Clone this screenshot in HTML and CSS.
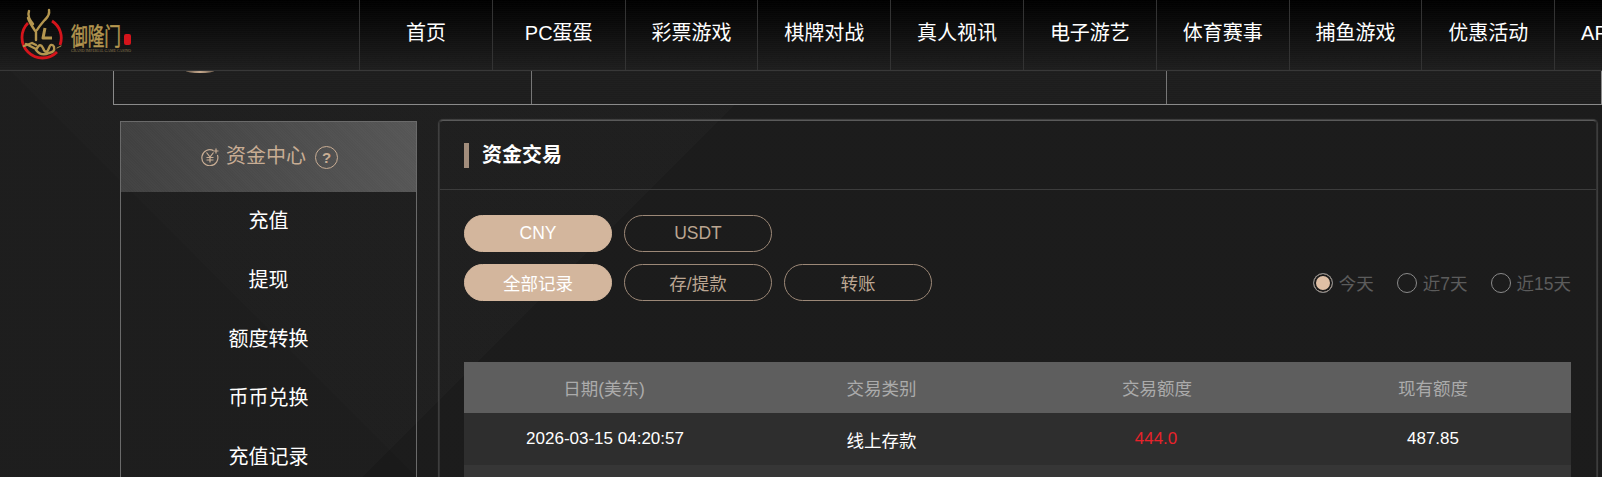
FILE: index.html
```html
<!DOCTYPE html>
<html lang="zh-CN">
<head>
<meta charset="utf-8">
<title>资金交易</title>
<link rel="stylesheet" href="styles.css">
</head>
<body>
<header class="topbar">
  <a class="logo" href="#">
    <svg class="logo-svg" viewBox="0 0 150 70" width="150" height="70" aria-label="御隆门">
      <path class="ring" d="M28 23A20 20 0 1 0 57 52M60 45A20 20 0 0 0 52 21"/>
      <path class="gold" d="M29 11C27 16 30 20 33 24L28 18C30 24 34 29 36 32L36 40M49 10C50 15 47 18 45 20L48 16C44 21 40 25 37 30"/>
      <path class="gold thick" d="M45 28L43 38L52 38"/>
      <path class="gold" d="M24 46L32 43L36 45M26 44L36 49M36 50C39 44 41 44 43 48C45 53 47 53 49 48C50 44 53 44 54 47C55 51 53 52 49 53C45 55 40 55 36 50"/>
      <path class="gold thin" d="M57 48L61 46"/>
      <text class="logo-name" x="71" y="45" textLength="50" lengthAdjust="spacingAndGlyphs">御隆门</text>
      <text class="logo-sub" x="71" y="52" textLength="60" lengthAdjust="spacingAndGlyphs">GRAND IMPERIAL GAME CASINO</text>
      <rect class="seal" x="124" y="34" width="7" height="11" rx="2"/>
    </svg>
  </a>
  <nav class="nav">
    <a class="nav-item" href="#">首页</a>
    <a class="nav-item" href="#">PC蛋蛋</a>
    <a class="nav-item" href="#">彩票游戏</a>
    <a class="nav-item" href="#">棋牌对战</a>
    <a class="nav-item" href="#">真人视讯</a>
    <a class="nav-item" href="#">电子游艺</a>
    <a class="nav-item" href="#">体育赛事</a>
    <a class="nav-item" href="#">捕鱼游戏</a>
    <a class="nav-item" href="#">优惠活动</a>
    <a class="nav-item" href="#">APP下载</a>
  </nav>
</header>

<section class="info">
  <div class="info-cell info-a"><div class="avatar-edge"></div></div>
  <div class="info-cell info-b"></div>
  <div class="info-cell info-c"></div>
</section>

<div class="content">
  <aside class="side">
    <div class="side-title">
      <svg class="coin" viewBox="0 0 18 18" width="18" height="18">
        <path d="M12.5 2.6A8 8 0 1 0 16.4 7"/>
        <path d="M5.5 4.5L9 9L12.5 4.5M9 9V14.5M5.5 9.5H12.5M5.5 12H12.5M15 0.5V5.5M12.5 3H17.5"/>
      </svg>
      <span class="side-label">资金中心</span>
      <span class="help">?</span>
    </div>
    <a class="side-item" href="#">充值</a>
    <a class="side-item" href="#">提现</a>
    <a class="side-item" href="#">额度转换</a>
    <a class="side-item" href="#">币币兑换</a>
    <a class="side-item" href="#">充值记录</a>
  </aside>

  <main class="panel">
    <h1 class="panel-title"><span class="marker"></span><span class="title-text">资金交易</span></h1>
    <div class="panel-body">
      <div class="btn-row">
        <button class="pill is-on">CNY</button>
        <button class="pill">USDT</button>
      </div>
      <div class="filter-row">
        <div class="btn-row">
          <button class="pill is-on">全部记录</button>
          <button class="pill">存/提款</button>
          <button class="pill">转账</button>
        </div>
        <div class="radios">
          <label class="radio"><span class="dot is-on"></span>今天</label>
          <label class="radio"><span class="dot"></span>近7天</label>
          <label class="radio"><span class="dot"></span>近15天</label>
        </div>
      </div>
      <table class="records">
        <thead>
          <tr><th>日期(美东)</th><th>交易类别</th><th>交易额度</th><th>现有额度</th></tr>
        </thead>
        <tbody>
          <tr><td class="num date">2026-03-15 04:20:57</td><td>线上存款</td><td class="num amount">444.0</td><td class="num">487.85</td></tr>
          <tr><td></td><td></td><td></td><td></td></tr>
        </tbody>
      </table>
    </div>
  </main>
</div>
</body>
</html>
```
FILE: styles.css
```css
* { box-sizing: border-box; }
html, body { margin: 0; height: 477px; overflow: hidden; }
body {
  width: 1602px;
  font-family: "Liberation Sans", "Noto Sans CJK SC", sans-serif;
  color: #fff;
  background-color: #1c1c1c;
  background-image:
    linear-gradient(135deg, rgba(255,255,255,.012) 26.25%, rgba(0,0,0,.05) 26.25%),
    linear-gradient(45deg, rgba(0,0,0,.035) 48.1%, rgba(255,255,255,.004) 48.1%);
  background-size: 1600px 1600px;
  background-repeat: no-repeat;
}
a { color: inherit; text-decoration: none; }

.topbar {
  display: flex;
  height: 71px;
  border-bottom: 1px solid #383838;
  background-color: #000;
  background-image:
    repeating-linear-gradient(0deg, rgba(255,255,255,.012) 0 1px, transparent 1px 2px),
    linear-gradient(180deg, #000 0, #1e1e1e 100%);
}
.logo { display: block; width: 359px; flex: none; }
.logo-svg { display: block; }
.ring { fill: none; stroke: #d5141b; stroke-width: 2.8; }
.gold { fill: none; stroke: #b4964f; stroke-width: 2.4; stroke-linecap: round; stroke-linejoin: round; }
.thick { stroke-width: 3; stroke-linecap: butt; }
.thin { stroke-width: 1; }
.logo-name { font-family: "Noto Sans CJK SC", sans-serif; font-size: 24px; fill: #b4964f; stroke: #b4964f; stroke-width: .5px; }
.logo-sub { font-family: "Liberation Serif", serif; font-size: 3.4px; fill: #8d7a50; }
.seal { fill: #d5141b; }

.nav { display: flex; flex: 1; min-width: 0; overflow: hidden; }
.nav-item {
  flex: none;
  width: 132.8px;
  height: 70px;
  padding-top: 19px;
  font-size: 20px;
  line-height: 28px;
  text-align: center;
  border-left: 1px solid #333;
}

.info {
  display: flex;
  height: 34px;
  margin-left: 113px;
  border: 1px solid #8a8a8a;
  border-top: 0;
  background-color: #1d1d1d;
  background-image: repeating-linear-gradient(0deg, rgba(255,255,255,.012) 0 1px, transparent 1px 2px);
}
.info-cell { border-right: 1px solid #777; }
.info-a { width: 418px; }
.info-b { width: 635px; }
.info-c { flex: 1; border-right: 0; }
.avatar-edge {
  width: 28px;
  height: 2px;
  margin-left: 72px;
  border-radius: 0 0 14px 14px / 0 0 2px 2px;
  background: linear-gradient(90deg, #6d5d4e, #c7aa8e 50%, #6d5d4e);
}

.content {
  display: flex;
  align-items: flex-start;
  gap: 22px;
  padding: 15px 0 0 120px;
}

.side {
  flex: none;
  width: 297px;
  margin-top: 1px;
  border: 1px solid #6a6a6a;
  border-bottom: 0;
}
.side-title {
  display: flex;
  align-items: center;
  justify-content: center;
  gap: 7px;
  height: 70px;
  padding-left: 2px;
  background-image:
    repeating-linear-gradient(45deg, rgba(255,255,255,.015) 0 1px, transparent 1px 2px),
    linear-gradient(90deg, #404040, #565656);
  color: #c8ad94;
  font-size: 20px;
}
.side-label { line-height: 28px; margin-bottom: 2px; }
.coin { fill: none; stroke: #c8ad94; stroke-width: 1.2; }
.help {
  width: 23px;
  height: 23px;
  margin-left: 2px;
  border: 1px solid #c8ad94;
  border-radius: 50%;
  font-size: 15px;
  font-weight: 700;
  line-height: 21px;
  text-align: center;
}
.side-item {
  display: block;
  height: 59px;
  line-height: 58px;
  font-size: 20px;
  text-align: center;
}

.panel {
  flex: none;
  width: 1158px;
  height: 400px;
  border: 1px solid #333;
  border-top-color: #5a5a5a;
  border-radius: 4px 4px 0 0;
  box-shadow: 0 0 1px 1px rgba(110,110,110,.45);
}
.panel-title {
  display: flex;
  align-items: center;
  gap: 13px;
  height: 69px;
  margin: 0;
  padding-left: 24px;
  border-bottom: 1px solid #3c3c3c;
  font-size: 20px;
  font-weight: 700;
}
.title-text { line-height: 28px; margin-bottom: 1px; }
.marker { width: 5px; height: 25px; background: #a28d7c; }
.panel-body { padding: 25px 25px 0 24px; }

.btn-row { display: flex; gap: 12px; }
.filter-row {
  display: flex;
  justify-content: space-between;
  align-items: center;
  margin-top: 12px;
}
.pill {
  width: 148px;
  height: 37px;
  padding: 0;
  border: 1px solid #9c8877;
  border-radius: 18.5px;
  background: transparent;
  color: #bba692;
  font: 17.5px "Liberation Sans", "Noto Sans CJK SC", sans-serif;
}
.pill.is-on { background: #d3b69d; border-color: #d3b69d; color: #fff; }

.radios { display: flex; gap: 23px; }
.radio { display: flex; align-items: center; gap: 6px; font-size: 17.5px; color: #5c5c5c; }
.dot {
  width: 20px;
  height: 20px;
  border: 1px solid #8a8a8a;
  border-radius: 50%;
}
.dot.is-on { background: #dfbfa5; box-shadow: inset 0 0 0 2px #1a1a1a; }

.records {
  width: 1107px;
  margin-top: 61px;
  border-collapse: collapse;
  table-layout: fixed;
  font-size: 17.5px;
}
.records th:nth-child(1) { width: 280px; }
.records th:nth-child(2) { width: 275px; }
.records th:nth-child(3) { width: 276px; }
.records th {
  height: 51px;
  background: #5e5e5e;
  color: #ababab;
  font-weight: 400;
}
.records td { height: 52px; background: #2e2e2e; color: #fff; text-align: center; }
.records tbody tr:nth-child(2) td { background: #363636; }
.records td.num { font-size: 17px; }
.records td.date { padding-left: 3px; }
.records td.amount { color: #e8222a; padding-right: 3px; }
```
